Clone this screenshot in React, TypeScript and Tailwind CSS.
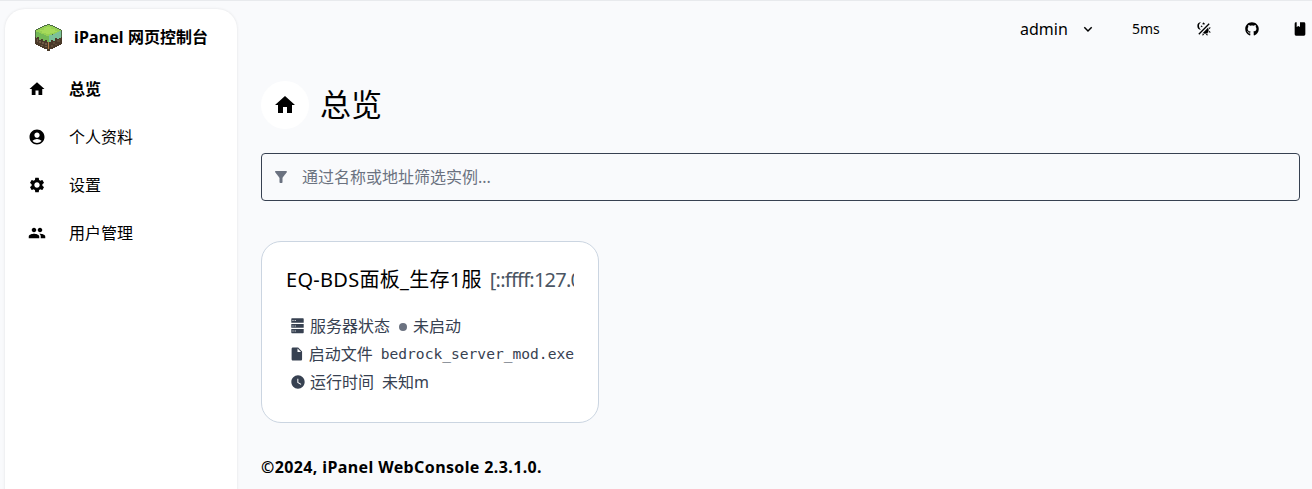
import React from "react";
import { MdHome, MdAccountCircle, MdSettings, MdPeople, MdFilterAlt, MdInsertDriveFile, MdWatchLater } from "react-icons/md";
import { FaGithub } from "react-icons/fa";

const menu = [
  { icon: MdHome, label: "总览", active: true },
  { icon: MdAccountCircle, label: "个人资料" },
  { icon: MdSettings, label: "设置" },
  { icon: MdPeople, label: "用户管理" },
];

function GrassBlock() {
  return (
    <svg viewBox="0 0 27 27" className="h-[27px] w-[27px]" shapeRendering="crispEdges">
      <path fill="#4d6b45" d="M12 0h3v1h3v1h2v1h2v1h2v1h2v1h1v9H0V6h1V5h2V4h2V3h2V2h2V1h3z" />
      <path fill="#4a3a2a" d="M0 13h27v7h-1v1h-2v1h-2v1h-2v1h-2v1h-3v2h-3v-2H9v-1H7v-1H5v-1H3v-1H1v-1H0z" />
      <path fill="#74b956" d="M1 7h4l8 4h1v7h-2v-2h-2v1H8v-2H6v1H4v-3H2v1H1z" />
      <path fill="#7cc199" d="M26 7v7h-2v1h-2v-1h-2v3h-2v-1h-2v2h-2v-7h3l6-4z" />
      <path fill="#96d053" d="M12 1h3v1h3v1h2v1h2v1h2v1h2v1h-2v1h-2v1h-2v1h-3v1h-3v1h-3v-1H9v-1H6V9H4V8H1V6h2V5h2V4h2V3h2V2h3z" />
      <path fill="#a6db5b" d="M11 3h5v2h4v2h2v1h-3v1h-4v1h-4V9H7V7H5V6h4V4h2z" />
      <path fill="#705a46" d="M2 15h1v3H2zM4 17h2v2H4zM7 18h2v2H7zM10 19h2v2h-2zM6 21h2v1H6zM10 22h2v1h-2z" />
      <path fill="#5f4c38" d="M18 18h2v2h-2zM22 16h2v2h-2zM16 21h2v2h-2zM20 20h2v1h-2zM24 15h1v3h-1z" />
      <path fill="#ad7946" d="M13 18h1v7h-1z" />
    </svg>
  );
}

function ThemeAuto() {
  return (
    <svg viewBox="0 0 24 24" className="h-4 w-4" fill="currentColor">
      <path d="M7.5 2C5.71 3.15 4.5 5.18 4.5 7.5s1.21 4.35 3.03 5.5A5.5 5.5 0 1 1 7.5 2M19.07 3.5l1.43 1.43L4.93 20.5 3.5 19.07zM12.89 5.93 11.41 5 9.97 6l.42-1.7L9 3.24l1.75-.12.58-1.65L12 3.1l1.73.03-1.35 1.13zm-3.3 3.61-1.16-.73-1.12.78.34-1.32-1.09-.83 1.36-.09.45-1.29.51 1.27 1.36.03-1.05.87zM19 13.5a5.5 5.5 0 0 1-5.5 5.5c-1.22 0-2.35-.4-3.26-1.07l7.69-7.69c.67.91 1.07 2.04 1.07 3.26m-4.4 6.58 2.77-1.15-.24 3.35zm4.33-2.7 1.15-2.77 2.2 2.54zm1.15-4.96-1.14-2.78 3.34.24zM9.63 18.93l2.77 1.15-2.53 2.19z" />
    </svg>
  );
}

function BookIcon() {
  return (
    <svg viewBox="0 0 24 24" className="h-4 w-4" fill="currentColor">
      <path d="M18 22a2 2 0 0 0 2-2V4a2 2 0 0 0-2-2h-6v7L9.500 7.500 7 9V2H6a2 2 0 0 0-2 2v16a2 2 0 0 0 2 2z" />
    </svg>
  );
}

function ServerIcon() {
  return (
    <svg viewBox="0 0 14 16" className="ml-px h-4 w-[14px]" fill="currentColor">
      <path fillRule="evenodd" d="M1 .3h11a.7.7 0 0 1 .7.7v3.7H.3V1A.7.7 0 0 1 1 .3M1.500 2v1h1V2zm2.200 0v1h1V2zM.3 6h12.400v3.700H.3zM1.500 7.400v1h1v-1zm2.200 0v1h1v-1zM.3 11h12.400v3.500a.7.7 0 0 1-.7.7H1a.7.7 0 0 1-.7-.7zM1.500 12.500v1h1v-1zm2.200 0v1h1v-1z" />
    </svg>
  );
}

export default function App() {
  return (
    <div className="flex h-[489px] w-[1312px] overflow-hidden border-t border-[#e8eaed] bg-[#f9fafc] font-['Noto_Sans','Noto_Sans_CJK_SC',sans-serif] text-base text-black">
      <aside className="ml-[5px] mt-2 h-[520px] w-[232px] shrink-0 rounded-[20px] bg-white shadow-[0_0_3px_rgba(0,0,0,0.1)]">
        <div className="flex h-14 items-center pl-[30px]">
          <GrassBlock />
          <span className="ml-3 whitespace-nowrap font-bold leading-6 tracking-[0.12px]">
            iPanel <span className="tracking-normal">网页控制台</span>
          </span>
        </div>
        <nav>
          {menu.map(({ icon: Icon, label, active }) => (
            <div key={label} className={active ? "flex h-12 items-center pl-[23px] font-bold" : "flex h-12 items-center pl-[23px]"}>
              <Icon className="h-[18px] w-[18px]" />
              <span className="ml-[23px]">{label}</span>
            </div>
          ))}
        </nav>
      </aside>

      <main className="ml-6 flex w-[1051px] shrink-0 flex-col">
        <header className="flex h-14 items-center pl-[759px]">
          <span className="w-[49px]">admin</span>
          <svg viewBox="0 0 16 16" className="ml-[11px] h-4 w-4" fill="none" stroke="currentColor" strokeWidth="1.5">
            <path d="m4.3 6.3 3.7 3.7 3.7-3.7" />
          </svg>
          <span className="ml-9 w-7 text-sm">5ms</span>
          <span className="ml-9"><ThemeAuto /></span>
          <FaGithub className="ml-[33px] h-[14px] w-[14px]" />
          <span className="ml-[33px] shrink-0"><BookIcon /></span>
        </header>
        <div className="mt-6 flex h-12 items-center">
          <div className="flex h-12 w-12 items-center justify-center rounded-full bg-white">
            <MdHome className="h-6 w-6" />
          </div>
          <h1 className="-mt-0.5 ml-[11px] text-[31px] leading-9">总览</h1>
        </div>
        <div className="mt-6 flex h-12 w-[1039px] items-center rounded border border-[#374151] pl-2.5 text-[#6b7280]">
          <MdFilterAlt className="h-[18px] w-[18px]" />
          <span className="ml-3">通过名称或地址筛选实例...</span>
        </div>
        <section className="mt-10 h-[182px] w-[338px] rounded-[20px] border border-[#cbd5e1] bg-white px-6 pt-6">
          <div className="flex h-7 items-center overflow-hidden whitespace-nowrap text-xl">
            <h2 className="tracking-[0.28px]">EQ-BDS面板_生存1服</h2>
            <span className="ml-2 tracking-[-0.75px] text-[#4b5563]">[::ffff:127.0.0.1]</span>
          </div>
          <div className="mt-[18px] overflow-hidden whitespace-nowrap pl-1 text-[#374151]">
            <div className="flex h-7 items-center">
              <ServerIcon />
              <span className="ml-[5px]">服务器状态</span>
              <span className="ml-[9px] mt-0.5 h-2 w-2 rounded-full bg-[#6b7280]" />
              <span className="ml-1.5">未启动</span>
            </div>
            <div className="flex h-7 items-center">
              <MdInsertDriveFile className="-ml-px h-4 w-4" />
              <span className="ml-1">启动文件</span>
              <span className="ml-2 font-['DejaVu_Sans_Mono',monospace] text-[14.6px]">bedrock_server_mod.exe</span>
            </div>
            <div className="flex h-7 items-center">
              <MdWatchLater className="h-4 w-4" />
              <span className="ml-1">运行时间</span>
              <span className="ml-2">未知m</span>
            </div>
          </div>
        </section>
        <footer className="mt-8 text-base font-bold leading-6 tracking-[0.38px]">©2024, iPanel WebConsole 2.3.1.0.</footer>
      </main>
    </div>
  );
}
